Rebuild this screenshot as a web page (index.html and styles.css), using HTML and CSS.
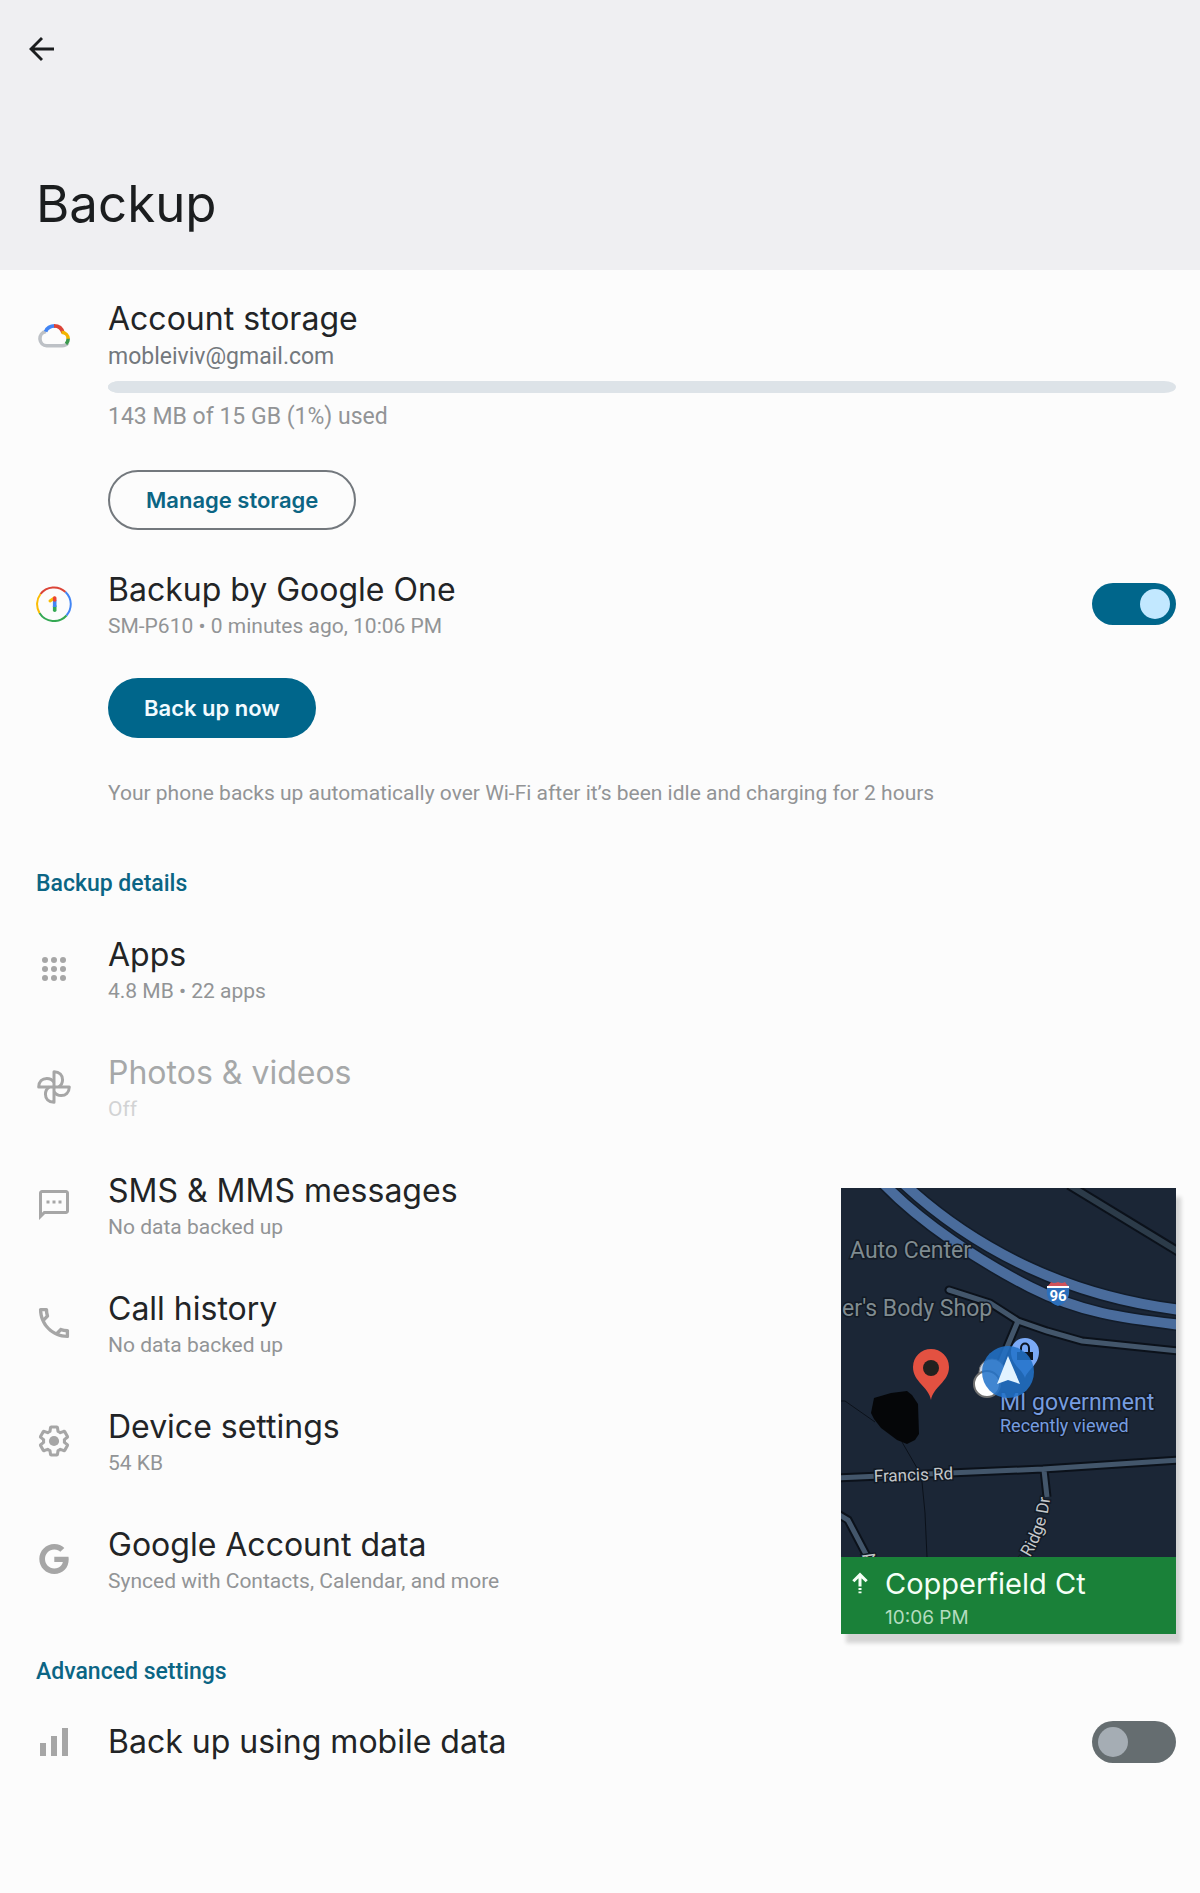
FILE: index.html
```html
<!DOCTYPE html>
<html lang="en">
<head>
<meta charset="utf-8">
<meta name="viewport" content="width=device-width, initial-scale=1">
<title>Backup</title>
<link rel="stylesheet" href="styles.css">
</head>
<body>
<header class="app-bar">
  <button class="back" type="button" aria-label="Back">
    <svg class="icon" viewBox="0 0 24 24"><path d="M20 12H5M12 4.700 4.700 12l7.300 7.300" fill="none" stroke="currentColor" stroke-width="1.900"/></svg>
  </button>
  <h1>Backup</h1>
</header>

<main>
  <section class="storage">
    <svg class="icon cloud" viewBox="-1 0 36 36" fill="none" stroke-width="3.600">
      <path d="M9 14.500a7.200 7.200 0 0 0 .800 14.300H25c2.500 0 4.500-1 5.800-3" stroke="#bdc1c6"/>
      <path d="M8.600 14.600C10 11 13.500 8.900 18 8.900" stroke="#4285f4"/>
      <path d="M17 8.900c4.500 0 8 2.600 9 7" stroke="#db4437"/>
      <path d="M24.500 15.300c4 .2 6.700 3.200 6.700 6.700" stroke="#f4b400"/>
      <path d="M31.200 21.800c0 2-.8 3.800-2.200 5" stroke="#3c9a4e"/>
    </svg>
    <div class="storage-body">
      <h2 class="title">Account storage</h2>
      <p class="email">mobleiviv@gmail.com</p>
      <progress class="meter" value="1" max="100" aria-label="Storage used">1%</progress>
      <p class="usage">143 MB of 15 GB (1%) used</p>
      <button class="pill outlined" type="button">Manage storage</button>
    </div>
  </section>

  <section>
    <div class="row">
      <svg class="icon" viewBox="0 0 36 36" fill="none">
        <g stroke-width="2">
          <path d="M4.500 8A17 17 0 0 1 29.500 6" stroke="#db4437"/>
          <path d="M29.500 6A17 17 0 0 1 30.500 29.500" stroke="#4285f4"/>
          <path d="M30.500 29.500A17 17 0 0 1 3.500 27" stroke="#34a853"/>
          <path d="M3.500 27A17 17 0 0 1 4.500 8" stroke="#fbbc04"/>
        </g>
        <g stroke-width="3.600" stroke-linecap="round">
          <path d="M18.700 20v4.200" stroke="#34a853"/>
          <path d="M18.700 14v7" stroke="#4285f4" stroke-linecap="butt"/>
          <path d="M18.300 12 14 15" stroke="#fbbc04" stroke-width="3"/>
          <path d="M18.700 12v2" stroke="#ea4335"/>
        </g>
      </svg>
      <label class="label" for="backup">
        <span class="title">Backup by Google One</span>
        <span class="sub">SM-P610 • 0 minutes ago, 10:06 PM</span>
      </label>
      <input class="switch" id="backup" type="checkbox" role="switch" checked>
    </div>
    <div class="indent">
      <button class="pill filled" type="button">Back up now</button>
      <p class="sub note">Your phone backs up automatically over Wi-Fi after it’s been idle and charging for 2 hours</p>
    </div>
  </section>

  <section>
    <h2 class="heading">Backup details</h2>
    <button class="row" type="button">
      <svg class="icon" viewBox="0 0 24 24" fill="currentColor">
        <circle cx="6" cy="6" r="2"/><circle cx="12" cy="6" r="2"/><circle cx="18" cy="6" r="2"/>
        <circle cx="6" cy="12" r="2"/><circle cx="12" cy="12" r="2"/><circle cx="18" cy="12" r="2"/>
        <circle cx="6" cy="18" r="2"/><circle cx="12" cy="18" r="2"/><circle cx="18" cy="18" r="2"/>
      </svg>
      <span class="label"><span class="title">Apps</span><span class="sub">4.8 MB • 22 apps</span></span>
    </button>
    <button class="row" type="button" disabled>
      <svg class="icon" viewBox="0 0 24 24" fill="none" stroke="currentColor" stroke-width="2" stroke-linejoin="round">
        <path id="blade" d="M12 12V1.800c3.700.100 5.700 2.400 5.700 5.400 0 2-.900 3.700-2.500 4.800"/>
        <use href="#blade" transform="rotate(90 12 12)"/>
        <use href="#blade" transform="rotate(180 12 12)"/>
        <use href="#blade" transform="rotate(270 12 12)"/>
      </svg>
      <span class="label"><span class="title">Photos &amp; videos</span><span class="sub">Off</span></span>
    </button>
    <button class="row" type="button">
      <svg class="icon" viewBox="0 0 24 24" fill="currentColor"><path d="M4 4h16v12H5.170L4 17.170V4m0-2c-1.100 0-1.990.900-1.990 2L2 22l4-4h14c1.100 0 2-.900 2-2V4c0-1.100-.900-2-2-2H4zM7 9h2v2H7zM11 9h2v2h-2zM15 9h2v2h-2z"/></svg>
      <span class="label"><span class="title">SMS &amp; MMS messages</span><span class="sub">No data backed up</span></span>
    </button>
    <button class="row" type="button">
      <svg class="icon" viewBox="2 2 20 20" fill="currentColor"><path transform="translate(12 12) scale(.93) translate(-12 -12)" d="M6.540 5c.060.890.210 1.760.450 2.590l-1.200 1.200c-.410-1.200-.670-2.470-.760-3.790h1.510m9.860 12.020c.850.240 1.720.390 2.600.450v1.490c-1.320-.090-2.590-.350-3.800-.750l1.200-1.190M7.500 3H4c-.550 0-1 .450-1 1 0 9.390 7.610 17 17 17 .550 0 1-.450 1-1v-3.490c0-.550-.450-1-1-1-1.240 0-2.450-.200-3.570-.570-.100-.040-.210-.050-.310-.050-.260 0-.510.100-.710.290l-2.200 2.200c-2.830-1.450-5.150-3.760-6.590-6.590l2.200-2.200c.280-.280.360-.670.250-1.020C8.700 6.450 8.500 5.250 8.500 4c0-.550-.450-1-1-1z"/></svg>
      <span class="label"><span class="title">Call history</span><span class="sub">No data backed up</span></span>
    </button>
    <button class="row" type="button">
      <svg class="icon" viewBox="0 0 24 24">
        <path fill="none" stroke="currentColor" stroke-width="2.200" stroke-linejoin="round" transform="translate(12 12) scale(.93) translate(-12 -12)" d="M19.430 12.980c.040-.320.070-.640.070-.980s-.030-.660-.070-.980l2.110-1.650c.190-.150.240-.420.120-.640l-2-3.460c-.120-.220-.390-.300-.610-.220l-2.490 1c-.520-.400-1.080-.730-1.690-.980l-.380-2.650C14.460 2.180 14.250 2 14 2h-4c-.250 0-.460.180-.490.420l-.380 2.650c-.610.250-1.170.590-1.690.980l-2.490-1c-.230-.090-.490 0-.610.220l-2 3.460c-.130.220-.070.490.120.640l2.110 1.650c-.040.320-.070.650-.070.980s.030.660.070.980l-2.110 1.650c-.190.150-.240.420-.120.640l2 3.460c.120.220.390.300.610.220l2.490-1c.520.400 1.080.730 1.690.980l.380 2.650c.030.240.240.420.490.420h4c.250 0 .460-.180.490-.420l.380-2.650c.610-.250 1.170-.590 1.690-.980l2.490 1c.230.090.490 0 .610-.220l2-3.460c.120-.220.070-.490-.120-.640z"/>
        <circle cx="12" cy="12" r="3.400" fill="currentColor"/>
      </svg>
      <span class="label"><span class="title">Device settings</span><span class="sub">54 KB</span></span>
    </button>
    <button class="row" type="button">
      <svg class="icon" viewBox="-2.400 -2.400 28.800 28.800" fill="currentColor"><path d="M12.240 10.285V14.400h6.806c-.275 1.765-2.056 5.174-6.806 5.174-4.095 0-7.439-3.389-7.439-7.574s3.345-7.574 7.439-7.574c2.330 0 3.891.989 4.785 1.849l3.254-3.138C18.189 1.186 15.479 0 12.240 0c-6.635 0-12 5.365-12 12s5.365 12 12 12c6.926 0 11.520-4.869 11.520-11.726 0-.788-.085-1.390-.189-1.989H12.240z"/></svg>
      <span class="label"><span class="title">Google Account data</span><span class="sub">Synced with Contacts, Calendar, and more</span></span>
    </button>
  </section>

  <section class="advanced">
    <h2 class="heading">Advanced settings</h2>
    <div class="row short">
      <svg class="icon" viewBox="0 0 36 36" fill="currentColor"><path d="M4 19h6v13H4zM15 12h6v20h-6zM26 4h6v28h-6z"/></svg>
      <label class="label" for="mobile"><span class="title">Back up using mobile data</span></label>
      <input class="switch" id="mobile" type="checkbox" role="switch">
    </div>
  </section>
</main>

<aside class="pip" aria-label="Navigation">
  <svg class="map" viewBox="0 0 335 369">
    <rect width="335" height="369" fill="#1b2636"/>
    <g fill="none" stroke="#0b111a">
      <path d="M228-3 338 64" stroke-width="10"/>
      <path d="M108 102 149 115 177 133 206 143 241 153 338 163M177 133 158 178" stroke-width="9" stroke-linecap="round"/>
      <path d="M-3 290 202 281 338 272M203 282 206 309M-3 326 7 332 28 372" stroke-width="9"/>
      <path d="M0 213H4L34 234M61 254 76 280 81 294 84 325 86 369" stroke-width="1"/>
    </g>
    <g fill="none" stroke="#43566b">
      <path d="M228-3 338 64" stroke="#2c3b49" stroke-width="6"/>
      <path d="M108 102 149 115 177 133 206 143 241 153 338 163M177 133 158 178" stroke-width="5" stroke-linecap="round"/>
      <path d="M-3 290 202 281 338 272M203 282 206 309M-3 326 7 332 28 372" stroke-width="5"/>
    </g>
    <g fill="none">
      <path d="M62-5C105 35 150 62 189 80S275 114 340 122" stroke="#121c2a" stroke-width="13"/>
      <path d="M42-5C80 35 140 74 189 99S280 130 340 137" stroke="#121c2a" stroke-width="13"/>
      <path d="M62-5C105 35 150 62 189 80S275 114 340 122M42-5C80 35 140 74 189 99S280 130 340 137" stroke="#4a6c9c" stroke-width="10"/>
    </g>
    <path d="M33 210 50 205 66 203 71 207 77 216 78 246 74 252 66 256 56 252 40 240 33 231 30 225Z" fill="#050608"/>
    <g class="place" font-size="23">
      <text x="9" y="70">Auto Center</text>
      <text x="1" y="128">er's Body Shop</text>
    </g>
    <g>
      <path d="M206 99q3-3 4-5 3 2 7 0 4 2 7 0 1 2 4 5z" fill="#d0525a"/>
      <path d="M206 98h22v2h-22z" fill="#fff"/>
      <path d="M206 100h22c1 9-2 15-11 18-9-3-12-9-11-18z" fill="#2c6fbb"/>
      <text x="217" y="113" class="shield" text-anchor="middle">96</text>
    </g>
    <path d="M90 212C88 199 72 194 72 179a18 18 0 0 1 36 0c0 15-16 20-18 33z" fill="#e35141"/>
    <circle cx="90" cy="180" r="8" fill="#23211f"/>
    <path d="M184 190c-2-8-14-13-14-26a14 14 0 0 1 28 0c0 13-12 18-14 26z" fill="#7baaf7"/>
    <path d="M176 164h16v8h-16z" fill="#0c1522"/>
    <path d="M180 166v-6c0-6 8-6 8 0v6" fill="none" stroke="#0c1522" stroke-width="2"/>
    <circle cx="151" cy="184" r="13" fill="#c8d4e4" stroke="#707070"/>
    <circle cx="146" cy="196" r="13" fill="#fff" stroke="#707070" stroke-width="2"/>
    <text class="poi" x="159" y="222" font-size="23">MI government</text>
    <text class="poi" x="159" y="244" font-size="18">Recently viewed</text>
    <circle cx="167" cy="184" r="26" fill="#2272c9" fill-opacity=".86"/>
    <path d="M167 168 179 196 167 192 156 196Z" fill="#e1f3ff"/>
    <g class="road" font-size="17">
      <text x="33" y="294" transform="rotate(-2 33 294)">Francis Rd</text>
      <path id="ridge" d="M182 380Q209 343 210 296" fill="none"/>
      <text><textPath href="#ridge">y Ridge Dr</textPath></text>
      <text x="26" y="377" transform="rotate(62 26 377)" text-anchor="end">A</text>
    </g>
  </svg>
  <div class="turn">
    <svg class="ahead" viewBox="0 0 18 24" fill="none" stroke="#f4fff6" stroke-width="3.400"><path d="M1.500 10 9 2.600l7.500 7.400M9 3v13M9 17.500v2.500M9 21.500v2"/></svg>
    <div>
      <p class="street">Copperfield Ct</p>
      <p class="time">10:06 PM</p>
    </div>
  </div>
</aside>
</body>
</html>
```
FILE: styles.css
```css
* {
  box-sizing: border-box;
}

body {
  position: relative;
  margin: 0;
  background: #fcfcfc;
  color: #222426;
  font-family: Roboto, "Liberation Sans", sans-serif;
}

h1, h2, p {
  margin: 0;
  font-weight: 400;
}

button {
  border: 0;
  background: none;
  color: inherit;
  font: inherit;
  text-align: left;
}

.app-bar {
  display: flex;
  flex-direction: column;
  justify-content: space-between;
  align-items: flex-start;
  min-height: 270px;
  padding: 31px 36px 32px 24px;
  background: #efeff2;
  color: #1b1d1f;
}

.back {
  padding: 0;
}

h1 {
  padding-left: 12px;
  font-family: Inter, sans-serif;
  font-size: 51px;
  line-height: 68px;
}

.icon {
  display: block;
  flex: none;
  width: 36px;
  height: 36px;
}

.title {
  font-family: Inter, sans-serif;
  font-size: 32px;
  line-height: 44px;
}

.sub {
  color: #929496;
  font-size: 21px;
  line-height: 28px;
}

.storage {
  display: flex;
  gap: 36px;
  padding: 27px 24px 15px 36px;
}

.cloud {
  margin-top: 20px;
}

.storage-body {
  flex: 1;
  display: flex;
  flex-direction: column;
  align-items: flex-start;
}

.email, .usage {
  font-size: 23px;
  line-height: 28px;
}

.email {
  margin-top: 2px;
  color: #73787d;
}

.usage {
  color: #929496;
}

.meter {
  display: block;
  appearance: none;
  width: 100%;
  height: 12px;
  margin: 10px 0;
  border: 0;
  border-radius: 12px / 6px;
  background: #dde3e8;
  overflow: hidden;
}

.meter::-webkit-progress-bar,
.meter::-webkit-progress-value {
  background: #dde3e8;
}

.pill {
  height: 60px;
  padding: 0 36px;
  border-radius: 30px;
  font-family: Inter, sans-serif;
  font-size: 22px;
  font-weight: 600;
}

.outlined {
  margin-top: 39px;
  border: 2px solid #73787d;
  color: #0b6584;
}

.filled {
  background: #00668b;
  color: #f2fbff;
}

.row {
  display: flex;
  align-items: center;
  gap: 36px;
  width: 100%;
  min-height: 118px;
  padding: 0 24px 0 36px;
}

.row.short {
  min-height: 96px;
}

.row > .icon {
  color: #a6a6a6;
}

.label {
  flex: 1;
  display: flex;
  flex-direction: column;
}

.row:disabled .title {
  color: #a6a8a9;
}

.row:disabled .sub {
  color: #d2d3d4;
}

.indent {
  padding: 15px 24px 0 108px;
}

.note {
  margin-top: 41px;
}

.heading {
  padding: 62px 36px 11px;
  color: #0b6584;
  font-size: 23px;
  font-weight: 500;
  line-height: 30px;
}

.advanced .heading {
  padding: 39px 36px 7px;
}

.advanced {
  padding-bottom: 96px;
}

.switch {
  appearance: none;
  flex: none;
  width: 84px;
  height: 42px;
  margin: 0;
  padding: 6px;
  border-radius: 21px;
  background: #656d70;
}

.switch::before {
  content: "";
  display: block;
  width: 30px;
  height: 30px;
  border-radius: 50%;
  background: #a5adb4;
}

.switch:checked {
  background: #00668b;
}

.switch:checked::before {
  margin-left: auto;
  background: #c2e8ff;
}

/* Floating picture-in-picture navigation window */
.pip {
  position: absolute;
  top: 1188px;
  right: 24px;
  width: 335px;
  box-shadow: 5px 9px 4px #d4d4d4;
}

.map {
  display: block;
  width: 100%;
}

.map text {
  paint-order: stroke;
  stroke: #121a25;
  stroke-width: 3px;
}

.place {
  fill: #7f8b90;
}

.poi {
  fill: #769de0;
}

.road {
  fill: #c3c6c9;
}

.map .shield {
  fill: #fff;
  stroke: none;
  font-size: 15px;
  font-weight: 700;
}

.turn {
  display: flex;
  gap: 17px;
  padding: 7px 11px 2px;
  background: #1a8139;
  color: #f4fff6;
}

.ahead {
  flex: none;
  width: 16px;
  height: 24px;
  margin-top: 7px;
}

.street {
  font-family: Inter, sans-serif;
  font-size: 29px;
  line-height: 40px;
}

.time {
  color: #b3dcbf;
  font-family: Inter, sans-serif;
  font-size: 19px;
  line-height: 28px;
}
```
